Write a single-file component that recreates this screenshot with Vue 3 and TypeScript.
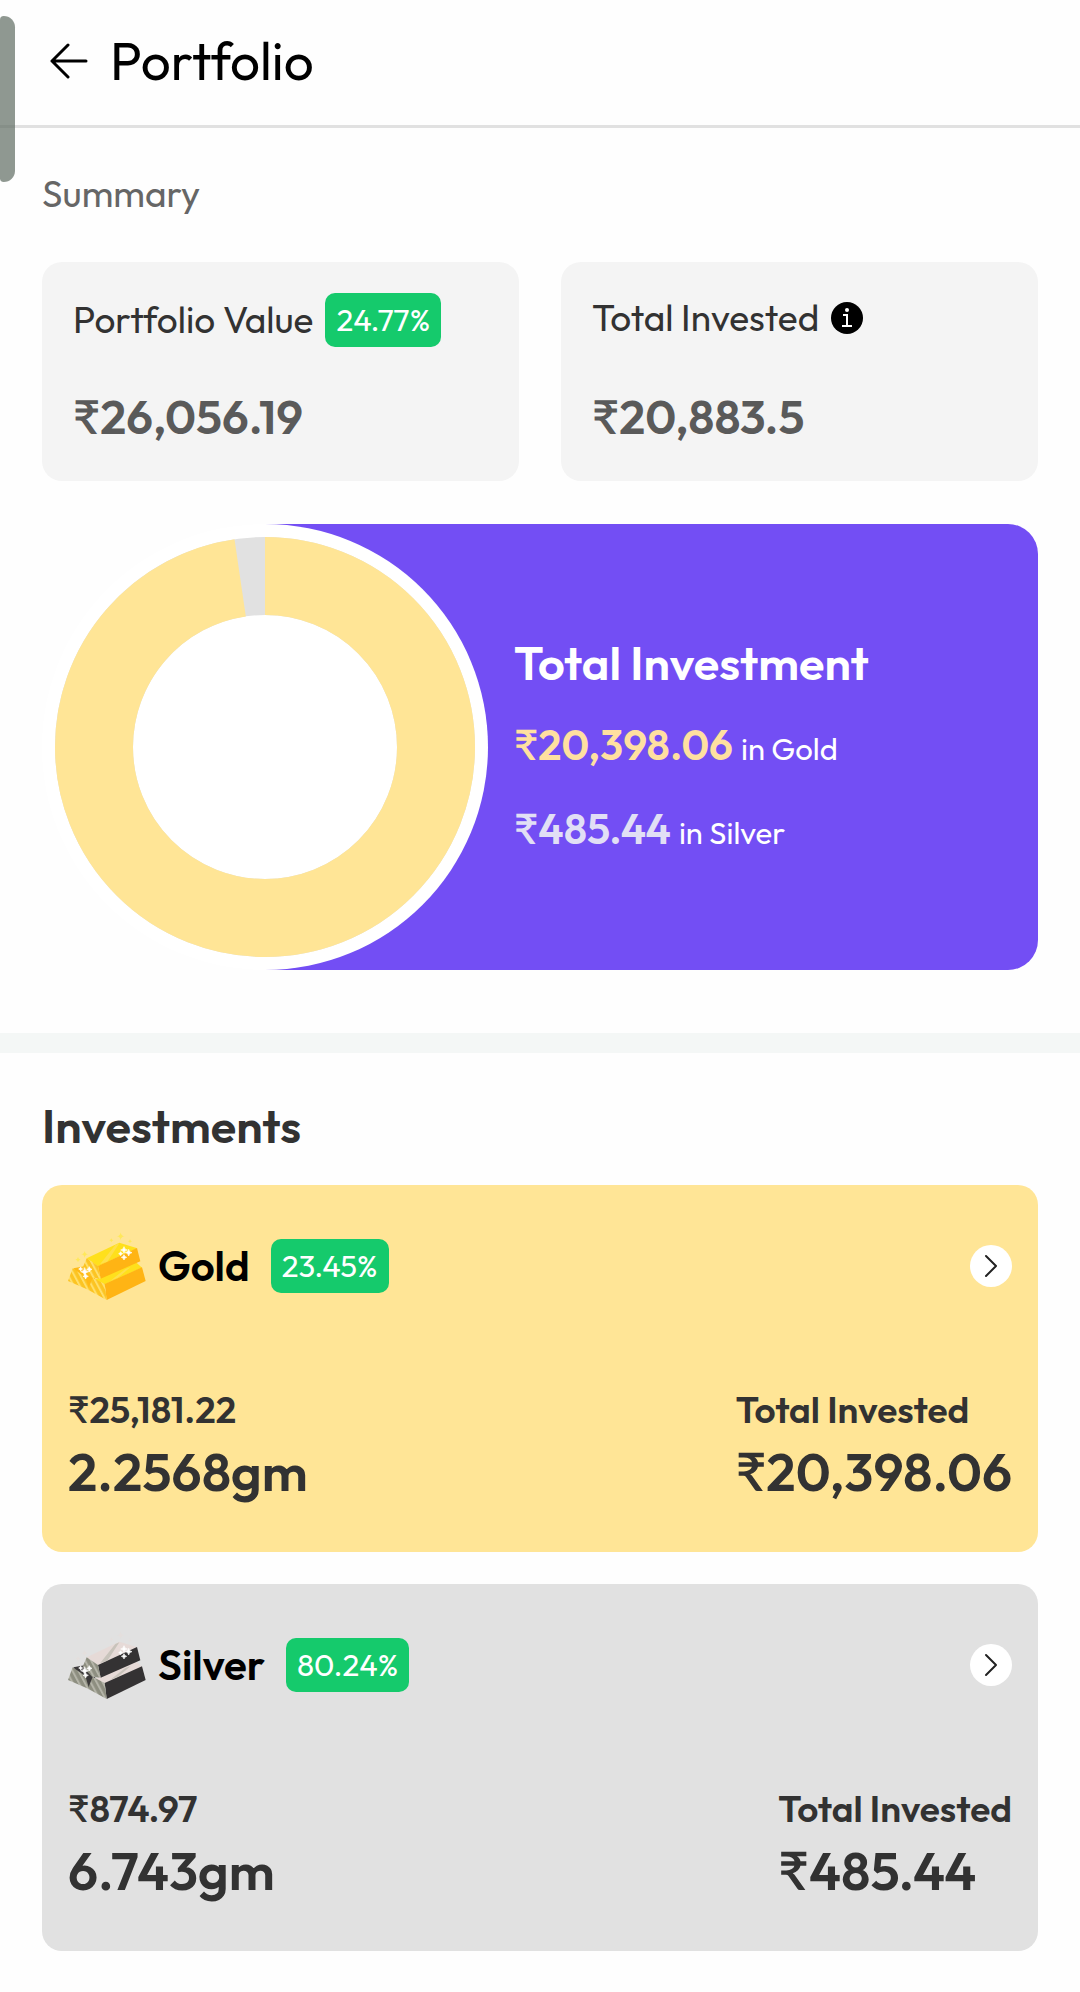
<script setup lang="ts">
interface Sparkle {
  x: number
  y: number
  r: number
}

interface Palette {
  top: string
  side: string
  end: string
  stripe: string
  gap: string
  shine: string
}

interface Holding {
  id: string
  name: string
  gain: string
  value: string
  weight: string
  invested: number
  palette: Palette
}

const holdings: Holding[] = [
  {
    id: 'gold',
    name: 'Gold',
    gain: '23.45%',
    value: '₹25,181.22',
    weight: '2.2568gm',
    invested: 20398.06,
    palette: { top: '#ffe01c', side: '#ffb414', end: '#fcc422', stripe: '#ffdf6a', gap: '#ffb914', shine: '#ffe85a' },
  },
  {
    id: 'silver',
    name: 'Silver',
    gain: '80.24%',
    value: '₹874.97',
    weight: '6.743gm',
    invested: 485.44,
    palette: { top: '#e6dad7', side: '#343233', end: '#8d8e80', stripe: '#b4b4a8', gap: '#3b393a', shine: '#e4dfdd' },
  },
]

const sparkles: Sparkle[] = [
  { x: 104, y: 188, r: 12 },
  { x: 118, y: 181, r: 8 },
  { x: 92, y: 180, r: 6 },
  { x: 107, y: 202, r: 8 },
  { x: 222, y: 123, r: 10 },
  { x: 236, y: 131, r: 10 },
  { x: 222, y: 145, r: 8 },
  { x: 212, y: 134, r: 6 },
]

const glints: Sparkle[] = [
  { x: 212, y: 82, r: 12 },
  { x: 184, y: 94, r: 6 },
  { x: 240, y: 97, r: 6 },
  { x: 104, y: 136, r: 11 },
  { x: 84, y: 152, r: 8 },
]

function star({ x, y, r }: Sparkle): string {
  return `M${x} ${y - r}Q${x + 1} ${y - 1} ${x + r} ${y}Q${x + 1} ${y + 1} ${x} ${y + r}Q${x - 1} ${y + 1} ${x - r} ${y}Q${x - 1} ${y - 1} ${x} ${y - r}Z`
}

function rupees(amount: number): string {
  return '₹' + amount.toLocaleString('en-US', { maximumFractionDigits: 2 })
}

const total = holdings.reduce((sum, h) => sum + h.invested, 0)
const goldShare = (holdings[0].invested / total) * 100
</script>

<template>
  <div class="page">
    <div class="edge-handle"></div>

    <header class="header">
      <button class="back" type="button" aria-label="Back">
        <svg viewBox="0 0 38 36" width="38" height="36" fill="none" stroke="#000" stroke-width="3" stroke-linecap="round" stroke-linejoin="round">
          <path d="M36 18H2M18 2L2 18L18 34" />
        </svg>
      </button>
      <h1>Portfolio</h1>
    </header>

    <main>
      <section class="summary">
        <h2 class="summary-title">Summary</h2>

        <div class="stats">
          <div class="stat">
            <div class="stat-head">
              <span>Portfolio Value</span>
              <span class="badge">24.77%</span>
            </div>
            <strong class="stat-value">₹26,056.19</strong>
          </div>
          <div class="stat">
            <div class="stat-head plain">
              <span>Total Invested</span>
              <button class="info" type="button" aria-label="About total invested">
                <svg viewBox="0 0 32 32" width="32" height="32">
                  <circle cx="16" cy="16" r="16" fill="#000" />
                  <circle cx="16" cy="8" r="2" fill="#fff" />
                  <path d="M12 13H16V24M11 24H21" fill="none" stroke="#fff" stroke-width="2" />
                </svg>
              </button>
            </div>
            <strong class="stat-value">{{ rupees(total) }}</strong>
          </div>
        </div>

        <div class="split">
          <svg class="donut" viewBox="0 0 446 446" width="446" height="446" role="img" aria-label="Investment split">
            <circle cx="223" cy="223" r="223" fill="#fff" />
            <g fill="none" stroke-width="78" transform="rotate(-90 223 223)">
              <circle cx="223" cy="223" r="171" stroke="#e1e1e1" />
              <circle cx="223" cy="223" r="171" stroke="#ffe596" pathLength="100" :stroke-dasharray="`${goldShare} 100`" />
            </g>
          </svg>
          <div class="split-text">
            <h3>Total Investment</h3>
            <p v-for="h in holdings" :key="h.id">
              <strong :class="h.id">{{ rupees(h.invested) }}</strong>
              <span>in {{ h.name }}</span>
            </p>
          </div>
        </div>
      </section>

      <section class="investments">
        <h2>Investments</h2>
        <article v-for="h in holdings" :key="h.id" class="holding" :class="h.id">
          <div class="holding-head">
            <svg class="bars" viewBox="54 69 234 204" width="78" height="68">
              <defs>
                <pattern :id="'stripes-' + h.id" width="16" height="16" patternUnits="userSpaceOnUse" patternTransform="rotate(-28)">
                  <rect width="16" height="16" :fill="h.palette.end" />
                  <rect width="6" height="16" :fill="h.palette.stripe" />
                </pattern>
              </defs>
              <path :fill="h.palette.gap" d="M70 178L104 172L140 200L116 244Z" />
              <path :fill="`url(#stripes-${h.id})`" d="M68 178L106 204L118 244L54 216Z" />
              <path :fill="h.palette.top" d="M134 212L258 160L276 176L164 226Z" />
              <path :fill="h.palette.side" d="M164 225L276 175L287 216L170 273Z" />
              <path :fill="`url(#stripes-${h.id})`" d="M128 206L164 225L170 273L114 242Z" />
              <path :fill="h.palette.top" d="M110 148L208 101L262 118L144 172Z" />
              <path :fill="h.palette.side" d="M144 171L261 117L271 157L152 209Z" />
              <path :fill="`url(#stripes-${h.id})`" d="M110 148L144 171L152 209L126 206L98 176Z" />
              <path :fill="h.palette.stripe" opacity="0.6" d="M150 166L196 108L208 103L172 158ZM180 216L226 180L242 174L204 206Z" />
              <path v-for="(g, i) in glints" :key="'g' + i" :d="star(g)" :fill="h.palette.shine" />
              <path v-for="(s, i) in sparkles" :key="'s' + i" :d="star(s)" fill="#fff" stroke="#fff" stroke-width="2" />
            </svg>
            <h3>{{ h.name }}</h3>
            <span class="badge">{{ h.gain }}</span>
            <button class="open" type="button" :aria-label="'Open ' + h.name">
              <svg viewBox="0 0 42 42" width="42" height="42" fill="none" stroke="#222" stroke-width="2" stroke-linecap="round" stroke-linejoin="round">
                <path d="M16 11L26 21L16 31" />
              </svg>
            </button>
          </div>
          <div class="figures">
            <div>
              <p class="small">{{ h.value }}</p>
              <p class="large">{{ h.weight }}</p>
            </div>
            <div>
              <p class="small">Total Invested</p>
              <p class="large">{{ rupees(h.invested) }}</p>
            </div>
          </div>
        </article>
      </section>
    </main>
  </div>
</template>

<style>
body {
  background: #fefefe;
}
</style>

<style scoped>
.page {
  position: relative;
  font-family: Outfit, Lato, "Noto Sans", sans-serif;
  color: #323232;
}

h1,
h2,
h3,
p {
  margin: 0;
}

h2,
h3,
strong {
  font-weight: 600;
}

button {
  display: flex;
  padding: 0;
  border: 0;
  background: none;
  cursor: pointer;
}

.edge-handle {
  position: absolute;
  top: 16px;
  left: 0;
  width: 15px;
  height: 166px;
  border-radius: 4px 12px 12px 4px;
  background: rgba(96, 108, 99, 0.7);
}

.header {
  display: flex;
  align-items: center;
  gap: 22px;
  padding: 29px 50px 32px;
  border-bottom: 3px solid #e1e1e1;
}

h1 {
  font-size: 53px;
  line-height: 64px;
  font-weight: 400;
  color: #000;
}

.summary {
  padding: 44px 42px 63px;
  border-bottom: 20px solid #f4f7f6;
}

.summary-title {
  font-size: 37px;
  line-height: 44px;
  font-weight: 400;
  color: #666;
}

.stats {
  display: grid;
  grid-template-columns: 1fr 1fr;
  gap: 42px;
  margin-top: 46px;
}

.stat {
  padding: 31px 31px 36px;
  border-radius: 20px;
  background: #f4f4f4;
}

.stat-head {
  display: flex;
  align-items: center;
  gap: 12px;
  box-sizing: border-box;
  height: 54px;
  font-size: 37px;
  line-height: 44px;
}

.stat-head.plain {
  padding-bottom: 4px;
}

.badge {
  padding: 0 11px;
  border-radius: 10px;
  background: #15ca6c;
  color: #fff;
  font-size: 31px;
  line-height: 54px;
}

.stat-value {
  display: block;
  margin-top: 42px;
  font-size: 47px;
  line-height: 56px;
  color: #5a5a5a;
}

.split {
  display: flex;
  align-items: center;
  gap: 26px;
  margin-top: 43px;
  border-radius: 0 30px 30px 0;
  background: linear-gradient(90deg, transparent 223px, #734ef4 223px);
  color: #fff;
}

.donut {
  flex: none;
}

.split-text {
  display: flex;
  flex-direction: column;
  gap: 28px;
}

.split-text h3 {
  font-size: 47px;
  line-height: 56px;
}

.split-text p {
  display: flex;
  align-items: baseline;
  gap: 8px;
  font-size: 31px;
  line-height: 52px;
}

.split-text strong {
  font-size: 42px;
}

.split-text .gold {
  color: #ffe0a0;
}

.split-text .silver {
  color: #e1dff5;
}

.investments {
  display: flex;
  flex-direction: column;
  gap: 32px;
  padding: 46px 42px 40px;
}

.investments h2 {
  font-size: 47px;
  line-height: 54px;
}

.holding {
  padding: 47px 26px 48px;
  border-radius: 20px;
}

.holding.gold {
  background: #ffe596;
}

.holding.silver {
  background: #e1e1e1;
}

.holding-head {
  display: flex;
  align-items: center;
}

.holding-head h3 {
  margin: 0 21px 0 12px;
  font-size: 42px;
  line-height: 56px;
  color: #000;
}

.open {
  margin-left: auto;
  border-radius: 50%;
  background: #fff;
}

.figures {
  display: flex;
  justify-content: space-between;
  margin-top: 80px;
}

.small {
  font-size: 37px;
  line-height: 60px;
  font-weight: 600;
}

.large {
  font-size: 53px;
  line-height: 64px;
  font-weight: 600;
}
</style>
